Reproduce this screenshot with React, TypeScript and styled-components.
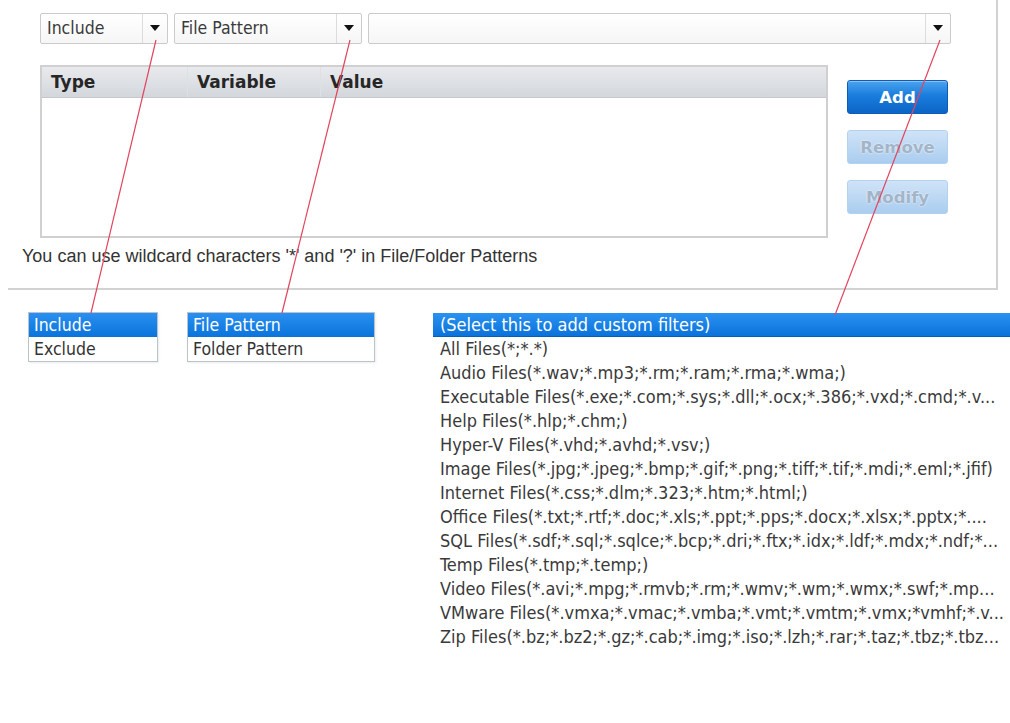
import React from 'react'
import styled, { createGlobalStyle } from 'styled-components'

const GlobalStyle = createGlobalStyle`
    html, body {
        margin: 0;
        padding: 0;
        background: #ffffff;
        overflow: hidden;
    }
    body {
        font-family: 'DejaVu Sans', 'Liberation Sans', sans-serif;
        color: #333333;
    }
`

const uiFont = `'DejaVu Sans Condensed', 'DejaVu Sans', sans-serif`

const filters = [
    'All Files(*;*.*)',
    'Audio Files(*.wav;*.mp3;*.rm;*.ram;*.rma;*.wma;)',
    'Executable Files(*.exe;*.com;*.sys;*.dll;*.ocx;*.386;*.vxd;*.cmd;*.v...',
    'Help Files(*.hlp;*.chm;)',
    'Hyper-V Files(*.vhd;*.avhd;*.vsv;)',
    'Image Files(*.jpg;*.jpeg;*.bmp;*.gif;*.png;*.tiff;*.tif;*.mdi;*.eml;*.jfif)',
    'Internet Files(*.css;*.dlm;*.323;*.htm;*.html;)',
    'Office Files(*.txt;*.rtf;*.doc;*.xls;*.ppt;*.pps;*.docx;*.xlsx;*.pptx;*....',
    'SQL Files(*.sdf;*.sql;*.sqlce;*.bcp;*.dri;*.ftx;*.idx;*.ldf;*.mdx;*.ndf;*...',
    'Temp Files(*.tmp;*.temp;)',
    'Video Files(*.avi;*.mpg;*.rmvb;*.rm;*.wmv;*.wm;*.wmx;*.swf;*.mp...',
    'VMware Files(*.vmxa;*.vmac;*.vmba;*.vmt;*.vmtm;*.vmx;*vmhf;*.v...',
    'Zip Files(*.bz;*.bz2;*.gz;*.cab;*.img;*.iso;*.lzh;*.rar;*.taz;*.tbz;*.tbz...',
]

const Caret = () => (
    <svg width="10" height="6" viewBox="0 0 10 6">
        <path d="M0 0 H10 L5 6 Z" fill="#111" />
    </svg>
)

const Combo: React.FunctionComponent<{ width: number; value?: string }> = ({
    width,
    value,
}) => (
    <ComboBox $width={width}>
        <ComboText>{value}</ComboText>
        <ComboArrow>
            <Caret />
        </ComboArrow>
    </ComboBox>
)

const App: React.FunctionComponent = () => {
    return (
        <Page>
            <GlobalStyle />
            <Panel>
                <ComboRow>
                    <Combo width={128} value="Include" />
                    <Combo width={188} value="File Pattern" />
                    <Combo width={583} />
                </ComboRow>
                <Main>
                    <Table>
                        <HeaderRow>
                            <HeaderCell $width={146}>Type</HeaderCell>
                            <HeaderCell $width={133}>Variable</HeaderCell>
                            <HeaderCell>Value</HeaderCell>
                        </HeaderRow>
                    </Table>
                    <Buttons>
                        <Button>Add</Button>
                        <Button disabled>Remove</Button>
                        <Button disabled>Modify</Button>
                    </Buttons>
                </Main>
                <Hint>
                    You can use wildcard characters '*' and '?' in File/Folder
                    Patterns
                </Hint>
            </Panel>

            <Lists>
                <SmallList $width={130}>
                    <SmallItem $selected>Include</SmallItem>
                    <SmallItem>Exclude</SmallItem>
                </SmallList>
                <SmallList $width={188}>
                    <SmallItem $selected>File Pattern</SmallItem>
                    <SmallItem>Folder Pattern</SmallItem>
                </SmallList>
                <FilterList>
                    <FilterItem $selected>
                        (Select this to add custom filters)
                    </FilterItem>
                    {filters.map((f) => (
                        <FilterItem key={f}>{f}</FilterItem>
                    ))}
                </FilterList>
            </Lists>

            {/* callout lines from each drop arrow to its opened list */}
            <Callouts width="1010" height="723" viewBox="0 0 1010 723">
                <line x1="156" y1="40" x2="91" y2="313" />
                <line x1="350" y1="40" x2="282" y2="313" />
                <line x1="940" y1="40" x2="835" y2="315" />
            </Callouts>
        </Page>
    )
}

const Page = styled.div`
    position: relative;
    width: 1010px;
    height: 723px;
    overflow: hidden;
`

const Panel = styled.section`
    margin-left: 8px;
    width: 990px;
    height: 290px;
    padding: 13px 0 0 32px;
    box-sizing: border-box;
    border-right: 2px solid #d2d2d2;
    border-bottom: 2px solid #d2d2d2;
`

const ComboRow = styled.div`
    display: flex;
    gap: 6px;
`

const ComboBox = styled.div<{ $width: number }>`
    display: flex;
    width: ${(p) => p.$width}px;
    height: 31px;
    box-sizing: border-box;
    border: 1px solid #cbcbcb;
    border-radius: 2px;
    background: linear-gradient(#ffffff, #f6f6f6);
`

const ComboText = styled.div`
    flex: 1;
    padding-left: 6px;
    line-height: 29px;
    font-family: ${uiFont};
    font-size: 17.5px;
    color: #3a3a3a;
`

const ComboArrow = styled.div`
    width: 24px;
    display: flex;
    align-items: center;
    justify-content: center;
    border-left: 1px solid #dcdcdc;
    padding-bottom: 2px;
`

const Main = styled.div`
    display: flex;
    margin-top: 21px;
`

const Table = styled.div`
    width: 788px;
    height: 173px;
    box-sizing: border-box;
    border: 2px solid #d0d0d0;
    background: #ffffff;
`

const HeaderRow = styled.div`
    display: flex;
    height: 30px;
    background: linear-gradient(#e8eaed, #d3d7dc);
    border-bottom: 1px solid #c4c8cd;
`

const HeaderCell = styled.div<{ $width?: number }>`
    ${(p) => (p.$width ? `width: ${p.$width}px;` : 'flex: 1;')}
    box-sizing: border-box;
    padding-left: 9px;
    line-height: 30px;
    font-size: 17px;
    font-weight: bold;
    color: #262626;
    border-right: 1px solid #dde0e4;

    &:last-child {
        border-right: none;
    }
`

const Buttons = styled.div`
    display: flex;
    flex-direction: column;
    gap: 16px;
    margin: 15px 0 0 19px;
`

const Button = styled.button`
    width: 101px;
    height: 34px;
    border-radius: 3px;
    font-family: 'DejaVu Sans', sans-serif;
    font-size: 16.5px;
    font-weight: bold;
    color: #ffffff;
    border: 1px solid #0d5cb8;
    background: linear-gradient(#4aa3ee 0%, #1a7ddd 45%, #0b64c6 100%);
    box-shadow: inset 0 1px 0 rgba(255, 255, 255, 0.35);
    padding: 0;

    &:disabled {
        color: #a3b5c8;
        border-color: #b4d2ef;
        background: linear-gradient(#cfe3f7, #aacdef);
        text-shadow: 0 0 2px #ffffff;
        box-shadow: none;
    }
`

const Hint = styled.p`
    margin: 8px 0 0 -18px;
    font-family: 'Liberation Sans', Arial, sans-serif;
    font-size: 18px;
    color: #333333;
`

const Lists = styled.div`
    display: flex;
    align-items: flex-start;
    margin-top: 22px;
    padding-left: 28px;
`

const SmallList = styled.div<{ $width: number }>`
    flex-shrink: 0;
    width: ${(p) => p.$width}px;
    margin-right: 29px;
    box-sizing: border-box;
    border: 1px solid #b9c3ce;
    box-shadow: 1px 1px 2px rgba(0, 0, 0, 0.08);
    background: #ffffff;

    & + & {
        margin-right: 58px;
    }
`

const SmallItem = styled.div<{ $selected?: boolean }>`
    height: 24px;
    line-height: 24px;
    padding-left: 5px;
    font-family: ${uiFont};
    font-size: 17.5px;
    color: ${(p) => (p.$selected ? '#ffffff' : '#333333')};
    background: ${(p) =>
        p.$selected ? 'linear-gradient(#2a8ff0, #0a74dc)' : 'transparent'};
    white-space: nowrap;
`

const FilterList = styled.div`
    flex-shrink: 0;
    width: 640px;
    margin-top: 1px;
`

const FilterItem = styled.div<{ $selected?: boolean }>`
    height: 24px;
    box-sizing: border-box;
    line-height: 24px;
    padding-left: 7px;
    font-family: ${uiFont};
    font-size: 18px;
    white-space: nowrap;
    color: ${(p) => (p.$selected ? '#ffffff' : '#3a3a3a')};
    background: ${(p) =>
        p.$selected ? 'linear-gradient(#2b92f2, #0a72da)' : 'transparent'};
    border-bottom: ${(p) => (p.$selected ? '1px solid #0760b8' : 'none')};
`

const Callouts = styled.svg`
    position: absolute;
    top: 0;
    left: 0;
    pointer-events: none;

    line {
        stroke: #e2455f;
        stroke-width: 1.2;
    }
`

export default App
